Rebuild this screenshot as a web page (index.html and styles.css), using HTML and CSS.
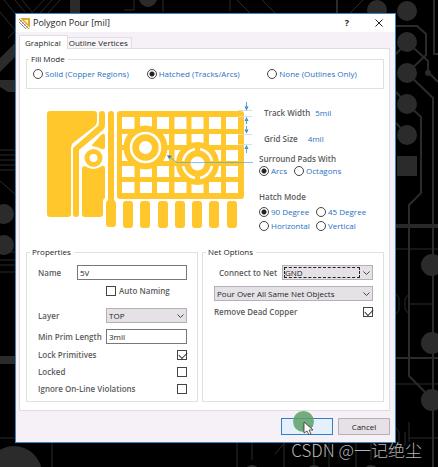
FILE: index.html
```html
<!DOCTYPE html>
<html lang="en">
<head>
<meta charset="utf-8">
<title>Polygon Pour [mil]</title>
<link rel="stylesheet" href="styles.css">
</head>
<body>
<svg class="board" viewBox="0 0 438 467" preserveAspectRatio="xMidYMid slice" aria-hidden="true">
  <g fill="none" stroke="#2b2b2c" stroke-width="1">
    <path d="M0 12 L15 30 M4 0 L18 17 M15 0 L25 12 M22 0 L32 12 M44 0 L8 38 M52 0 L14 42 M60 0 L48 13 M134 0 V10 M163 0 V12 M134 10 H124 M230 0 V11 M237 0 L250 13 M262 0 L275 13 M363 0 L350 13"/>
    <path d="M0 150 H15 M0 155 H15 M0 160 H15 M0 165 H15 M0 170 H15 M0 181 L15 194 M0 252 H15 M0 260 H15 M0 265 H15 M0 272 H15 M0 438 H15"/>
    <path d="M396 249 H438 M396 384 H438 M409 304 H433 M409 438 H438 M396 294 l3 4 v12 l-3 4 M409 294 l-4 5 v10 l4 5 M396 428 l3 4 v12 M409 422 v20 M405 432 v14"/>
    <path d="M52 443 V467 M237 443 V467 M252 443 V460 M284 443 V467 M314 443 V467 M329 443 V467 M275 454 L287 440 M371 443 V460 M356 443 V467"/>
  </g>
  <g fill="none" stroke="#2b2b2c" stroke-width="2">
    <path d="M396 26 H417 L426 34 V55 L407 73 M407 42 L428 61 V72 L438 82 M337 0 V13 M434 0 V54 H438 M407 73 L433 98 V467 M396 92 L407 104 M396 123 L407 135 M407 104 L421 117 V193 L409 205 V376 L433 400 M396 54 L407 42 M396 358 H438"/>
  </g>
  <path d="M396 226 H438 M75 0 V13 M0 67 L15 52" fill="none" stroke="#29292b" stroke-width="4"/>
  <g fill="#2b2b2c">
    <path d="M0 58 L15 43 V57 L0 72 Z M0 80 H15 V92 H8 L0 87 Z M0 356 H15 V364 H0 Z M70 0 H80 V13 H70 Z M397 156 h20 v20 h-20 z"/>
    <circle cx="148" cy="-2" r="9"/><circle cx="377" cy="10" r="10"/>
    <circle cx="407" cy="11" r="10"/><circle cx="407" cy="42" r="10"/><circle cx="407" cy="73" r="10"/><circle cx="407" cy="104" r="10"/><circle cx="407" cy="135" r="10"/>
    <circle cx="428" cy="73" r="3"/><circle cx="432" cy="265" r="11"/><circle cx="432" cy="343" r="11"/><circle cx="432" cy="400" r="11"/>
    <circle cx="4" cy="214" r="10"/><circle cx="4" cy="245" r="10"/><circle cx="14" cy="474" r="28"/>
    <circle cx="252" cy="473" r="8"/><circle cx="314" cy="473" r="8"/><circle cx="371" cy="473" r="8"/>
  </g>
</svg>

<main class="dialog">
  <header class="titlebar">
    <svg class="logo" viewBox="0 0 11 11" aria-hidden="true">
      <path d="M1 0H11V10Z" fill="#e0a92c"/>
      <path d="M5 2h4v4z" fill="#fff2c4"/>
      <path d="M0 1l10 10M0 4l7 7" stroke="#8f8b83" fill="none"/>
      <path d="M1 4l2-2M3 6l2-2M5 8l2-2M7 10l2-2" stroke="#c9c4ba" fill="none"/>
    </svg>
    <h1 class="title">Polygon Pour [mil]</h1>
    <button class="tool help" type="button">?</button>
    <button class="tool" type="button" aria-label="Close">
      <svg class="close" viewBox="0 0 8 8" aria-hidden="true"><path d="M.5.5l7 7M7.500.5l-7 7" stroke="#222" fill="none"/></svg>
    </button>
  </header>

  <nav class="tabs">
    <button class="tab active" type="button">Graphical</button>
    <button class="tab" type="button">Outline Vertices</button>
  </nav>

  <form class="panel">
    <fieldset class="group fill">
      <legend>Fill Mode</legend>
      <label class="option"><input type="radio" name="fill">Solid (Copper Regions)</label>
      <label class="option"><input type="radio" name="fill" checked>Hatched (Tracks/Arcs)</label>
      <label class="option"><input type="radio" name="fill">None (Outlines Only)</label>
    </fieldset>

    <section class="preview">
      <svg class="drawing" viewBox="47 100 206 130" aria-hidden="true">
        <g fill="#ffc72c">
          <path d="M50 111H94Q97 111 97 114V121Q97 124 95 126L73 143Q71 145 71 148V214Q71 217 68 217H50Q47 217 47 214V114Q47 111 50 111Z"/>
          <path d="M102 111Q105 111 105 114V125Q105 128 103 130L79 150V214Q79 217 76 217Q73 217 73 214V148L98 126Q99 125 99 122V114Q99 111 102 111Z"/>
          <path d="M92 145L101 135Q105 132 105 136V147Q105 150 102 149Q98 147 92 146Z"/>
          <path d="M85 166Q93 172 102 166Q105 165 105 169V198L103 200V214Q103 217 100 217H85Q82 217 82 214V169Q82 166 85 166Z"/>
          <path d="M111 111Q114 111 114 114V200Q116 201 116 204V224Q116 227 113 227H109Q106 227 106 224V204Q106 201 108 200V114Q108 111 111 111Z"/>
          <rect x="117" y="111" width="127" height="88" rx="3"/>
          <rect x="123" y="201" width="10" height="27" rx="3"/><rect x="140" y="201" width="10" height="27" rx="3"/><rect x="158" y="201" width="10" height="27" rx="3"/><rect x="175" y="201" width="10" height="27" rx="3"/><rect x="192" y="201" width="10" height="27" rx="3"/><rect x="209" y="201" width="10" height="27" rx="3"/><rect x="227" y="201" width="10" height="27" rx="3"/>
        </g>
        <circle cx="93.500" cy="158" r="6.500" fill="#fff" stroke="#ffc72c" stroke-width="5"/>
        <path fill="#fff" d="M122 117h12.500v12H122zM140 117h12v12h-12zM157 117h12v12h-12zM174.500 117h12v12h-12zM191.500 117h12v12h-12zM209 117h12v12h-12zM226 117h12v12h-12z
          M122 134h12.500v11H122zM157 134h12v11h-12zM174.500 134h12v11h-12zM191.500 134h12v11h-12zM209 134h12v11h-12zM226 134h12v11h-12z
          M122 150h12.500v11H122zM157 150h12v11h-12zM174.500 150h12v11h-12zM209 150h12v11h-12zM226 150h12v11h-12z
          M122 166h12.500v11H122zM140 166h12v11h-12zM157 166h12v11h-12zM174.500 166h12v11h-12zM209 166h12v11h-12zM226 166h12v11h-12z
          M122 182h12.500v11H122zM140 182h12v11h-12zM157 182h12v11h-12zM174.500 182h12v11h-12zM191.500 182h12v11h-12zM209 182h12v11h-12zM226 182h12v11h-12z"/>
        <g fill="#ffc72c"><circle cx="145.500" cy="147.500" r="22"/><circle cx="197.500" cy="163.500" r="21.500"/></g>
        <circle cx="145.500" cy="147.500" r="14.500" fill="none" stroke="#fff" stroke-width="2.500"/>
        <circle cx="145.500" cy="147.500" r="6.500" fill="#fff"/>
        <circle cx="197.500" cy="163.500" r="14.500" fill="none" stroke="#fff" stroke-width="2.500"/>
        <path d="M197.500 147v33M181 163.500h33" stroke="#ffc72c" stroke-width="5"/>
        <circle cx="197.500" cy="163.500" r="7" fill="#fff"/>
        <g fill="none" stroke="#d8dce3"><path d="M238 110.500h14M238 116.500h14M238 134.500h14M238 144.500h14"/></g>
        <path d="M168 156l9 6.500h76" fill="none" stroke="#5aa5dc" stroke-opacity=".7"/>
        <g fill="#2a86c8"><path d="M167 155l5 1-3 3zM246.500 110.500l2-4h-4zM246.500 117l2 4h-4zM246.500 133.500l2-4h-4zM246.500 145l2 4h-4z"/></g>
        <path d="M248.500 102v6M248.500 119v5M248.500 126v5M248.500 147v6" transform="translate(-2 0)" stroke="#5aa5dc"/>
      </svg>

      <div class="settings">
        <div class="measure"><span>Track Width</span><span class="value">5mil</span></div>
        <div class="measure wide"><span>Grid Size</span><span class="value">4mil</span></div>
        <div class="choices arcs" role="group" aria-labelledby="pads">
          <h2 id="pads">Surround Pads With</h2>
          <label class="option"><input type="radio" name="pads" checked>Arcs</label>
          <label class="option"><input type="radio" name="pads">Octagons</label>
        </div>
        <div class="choices hatch" role="group" aria-labelledby="hatch">
          <h2 id="hatch">Hatch Mode</h2>
          <label class="option"><input type="radio" name="hatch" checked>90 Degree</label>
          <label class="option"><input type="radio" name="hatch">45 Degree</label>
          <label class="option"><input type="radio" name="hatch">Horizontal</label>
          <label class="option"><input type="radio" name="hatch">Vertical</label>
        </div>
      </div>
    </section>

    <div class="columns">
      <fieldset class="group fields">
        <legend>Properties</legend>
        <div class="row name"><label for="name">Name</label><input class="text" id="name" type="text" value="5V"></div>
        <label class="row auto"><input type="checkbox">Auto Naming</label>
        <div class="row layer">
          <label for="layer">Layer</label>
          <span class="select"><select id="layer"><option>TOP</option></select><svg viewBox="0 0 7 4" aria-hidden="true"><path d="M.5.5l3 3 3-3"/></svg></span>
        </div>
        <div class="row layer"><label for="length">Min Prim Length</label><input class="text" id="length" type="text" value="3mil"></div>
        <label class="row check">Lock Primitives<input type="checkbox" checked></label>
        <label class="row check">Locked<input type="checkbox"></label>
        <label class="row check">Ignore On-Line Violations<input type="checkbox"></label>
      </fieldset>

      <fieldset class="group fields">
        <legend>Net Options</legend>
        <div class="row net">
          <label for="net">Connect to Net</label>
          <span class="select focused"><select id="net"><option>GND</option></select><svg viewBox="0 0 7 4" aria-hidden="true"><path d="M.5.5l3 3 3-3"/></svg></span>
        </div>
        <div class="row">
          <span class="select"><select aria-label="Pour mode"><option>Pour Over All Same Net Objects</option></select><svg viewBox="0 0 7 4" aria-hidden="true"><path d="M.5.5l3 3 3-3"/></svg></span>
        </div>
        <label class="row check">Remove Dead Copper<input type="checkbox" checked></label>
      </fieldset>
    </div>
  </form>

  <footer class="actions">
    <div class="confirm">
      <button class="button primary" type="button">OK</button>
      <svg class="pointer" viewBox="0 0 22 24" aria-hidden="true">
        <circle cx="10.500" cy="10.500" r="10.500" fill="#5da066" fill-opacity=".85"/>
        <path d="M11 11v11l3-2 2 4 2-1-2-4h4z" fill="#fff" stroke="#333" stroke-width=".8"/>
      </svg>
    </div>
    <button class="button" type="button">Cancel</button>
  </footer>
</main>
<p class="watermark">CSDN @一记绝尘</p>
</body>
</html>
```

FILE: styles.css
```css
* {
  box-sizing: border-box;
}

body {
  position: relative;
  min-height: 100vh;
  margin: 0;
  padding: 13px 42px 24px 15px;
  overflow: hidden;
  background: #000;
  color: #1c1c1c;
  font: 500 8px/10px "Open Sans", "Noto Sans", sans-serif;
}

button,
input,
select {
  margin: 0;
  padding: 0;
  border: 0;
  color: inherit;
  font: inherit;
}

h1,
h2,
p {
  margin: 0;
  font: inherit;
}

.board {
  position: absolute;
  inset: 0;
  width: 100%;
  height: 100%;
}

.dialog {
  position: relative;
  border: 1px solid #3c86c6;
  background: #f6f1f7;
}

.titlebar {
  display: flex;
  align-items: center;
  height: 18px;
  padding-left: 3px;
  background: #fff;
}

.logo {
  width: 11px;
  height: 11px;
  margin-right: 3px;
}

.title {
  flex: 1;
  font-size: 9px;
}

.tool {
  display: flex;
  align-items: center;
  justify-content: center;
  width: 32px;
  height: 18px;
  background: none;
}

.help {
  font-size: 9px;
  font-weight: 700;
}

.close {
  width: 8px;
  height: 8px;
}

.tabs {
  display: flex;
  align-items: flex-end;
  padding: 3px 3px 0;
}

.tab {
  height: 11px;
  padding: 0 3px 0 1px;
  border: 1px solid #e2dde3;
  border-width: 1px 1px 0 0;
  background: #f8f5f8;
}

.tab.active {
  position: relative;
  height: 14px;
  margin-bottom: -1px;
  padding: 0 6px 0 5px;
  border-left-width: 1px;
  background: #fff;
}

.panel {
  margin: 0 5px 0 3px;
  padding: 5px 5px 8px 6px;
  border: 1px solid #e0dce2;
  background: #fff;
}

.group {
  min-width: 0;
  margin: 0;
  border: 1px solid #e0e0e0;
}

legend {
  margin-left: -2px;
  padding: 0 3px 0 2px;
}

.fill {
  display: grid;
  grid-template-columns: 114fr 121fr 116fr;
  padding: 4px 0 9px 6px;
}

.fill legend {
  margin-left: -4px;
}

.option {
  display: flex;
  align-items: center;
  gap: 2px;
  height: 11px;
  color: #1f6fc4;
  white-space: nowrap;
}

input[type="radio"],
input[type="checkbox"] {
  flex: none;
  width: 10px;
  height: 10px;
  border: 1px solid #444;
  background: #fff;
  appearance: none;
}

input[type="radio"] {
  border-radius: 50%;
}

input[type="radio"]:checked {
  background: radial-gradient(circle, #222 0 2px, #fff 3px);
}

input[type="checkbox"]:checked::after {
  display: block;
  width: 7px;
  height: 4px;
  margin: 1px 0 0 1px;
  border: solid #333;
  border-width: 0 0 1px 1px;
  content: "";
  transform: rotate(-45deg);
}

.preview {
  display: flex;
  gap: 6px;
  height: 158px;
  padding: 11px 0 0 21px;
}

.drawing {
  flex: none;
  width: 206px;
  height: 130px;
}

.settings {
  padding-top: 8px;
  color: #5c5c5c;
  font-weight: 600;
}

.measure {
  display: flex;
  gap: 5px;
  height: 12px;
  margin-bottom: 14px;
  padding-left: 5px;
}

.measure.wide {
  gap: 10px;
  margin-bottom: 8px;
}

.value {
  color: #1f6fc4;
  font-weight: 500;
}

.settings .option {
  font-weight: 500;
}

.choices {
  display: grid;
  justify-content: start;
}

.choices h2 {
  grid-column: 1 / -1;
  height: 11px;
}

.arcs {
  grid-template-columns: 35px auto;
}

.hatch {
  grid-template-columns: 57px auto;
  row-gap: 3px;
  margin-top: 16px;
}

.columns {
  display: grid;
  grid-template-columns: 172fr 182fr;
  gap: 4px;
}

.fields {
  display: flex;
  flex-direction: column;
  gap: 6px;
  padding: 8px 10px 6px 11px;
}

.fields legend {
  margin-left: -8px;
}

.row {
  display: grid;
  align-items: center;
  color: #5c5c5c;
  font-weight: 600;
}

.name {
  grid-template-columns: 39px 1fr;
}

.layer {
  grid-template-columns: 68px 1fr;
}

.net {
  grid-template-columns: 63px 1fr;
  padding-left: 5px;
}

.auto {
  display: flex;
  gap: 3px;
  margin: 0 0 6px 68px;
}

.check {
  display: flex;
  justify-content: space-between;
  margin-bottom: 1px;
}

.text,
.select {
  width: 100%;
  min-width: 0;
  height: 15px;
  color: #1c1c1c;
  font-weight: 500;
}

.text {
  padding: 0 2px;
  border: 1px solid #777;
  background: #fff;
}

.select {
  position: relative;
  display: block;
}

.select select {
  width: 100%;
  height: 100%;
  padding: 0 14px 0 2px;
  border: 1px solid #b5b0b6;
  background: #e6e1e7;
  appearance: none;
}

.select svg {
  position: absolute;
  top: 6px;
  right: 3px;
  width: 7px;
  height: 4px;
  fill: none;
  stroke: #444;
}

.focused::after {
  position: absolute;
  inset: 2px 13px 2px 2px;
  border: 1px dashed #222;
  content: "";
}

.actions {
  display: flex;
  justify-content: flex-end;
  gap: 5px;
  padding: 7px 5px 7px 0;
}

.confirm {
  position: relative;
}

.button {
  display: block;
  width: 52px;
  height: 17px;
  border: 1px solid #b5b0b6;
  background: #e6e1e7;
}

.primary {
  border-color: #2f80c6;
  background: #e4f1fd;
}

.pointer {
  position: absolute;
  top: -7px;
  left: 12px;
  width: 22px;
  height: 24px;
}

.watermark {
  position: absolute;
  right: 16px;
  bottom: 5px;
  color: #b4b4b4;
  font: 300 17px/24px "Noto Sans CJK SC", sans-serif;
  white-space: nowrap;
}
```
